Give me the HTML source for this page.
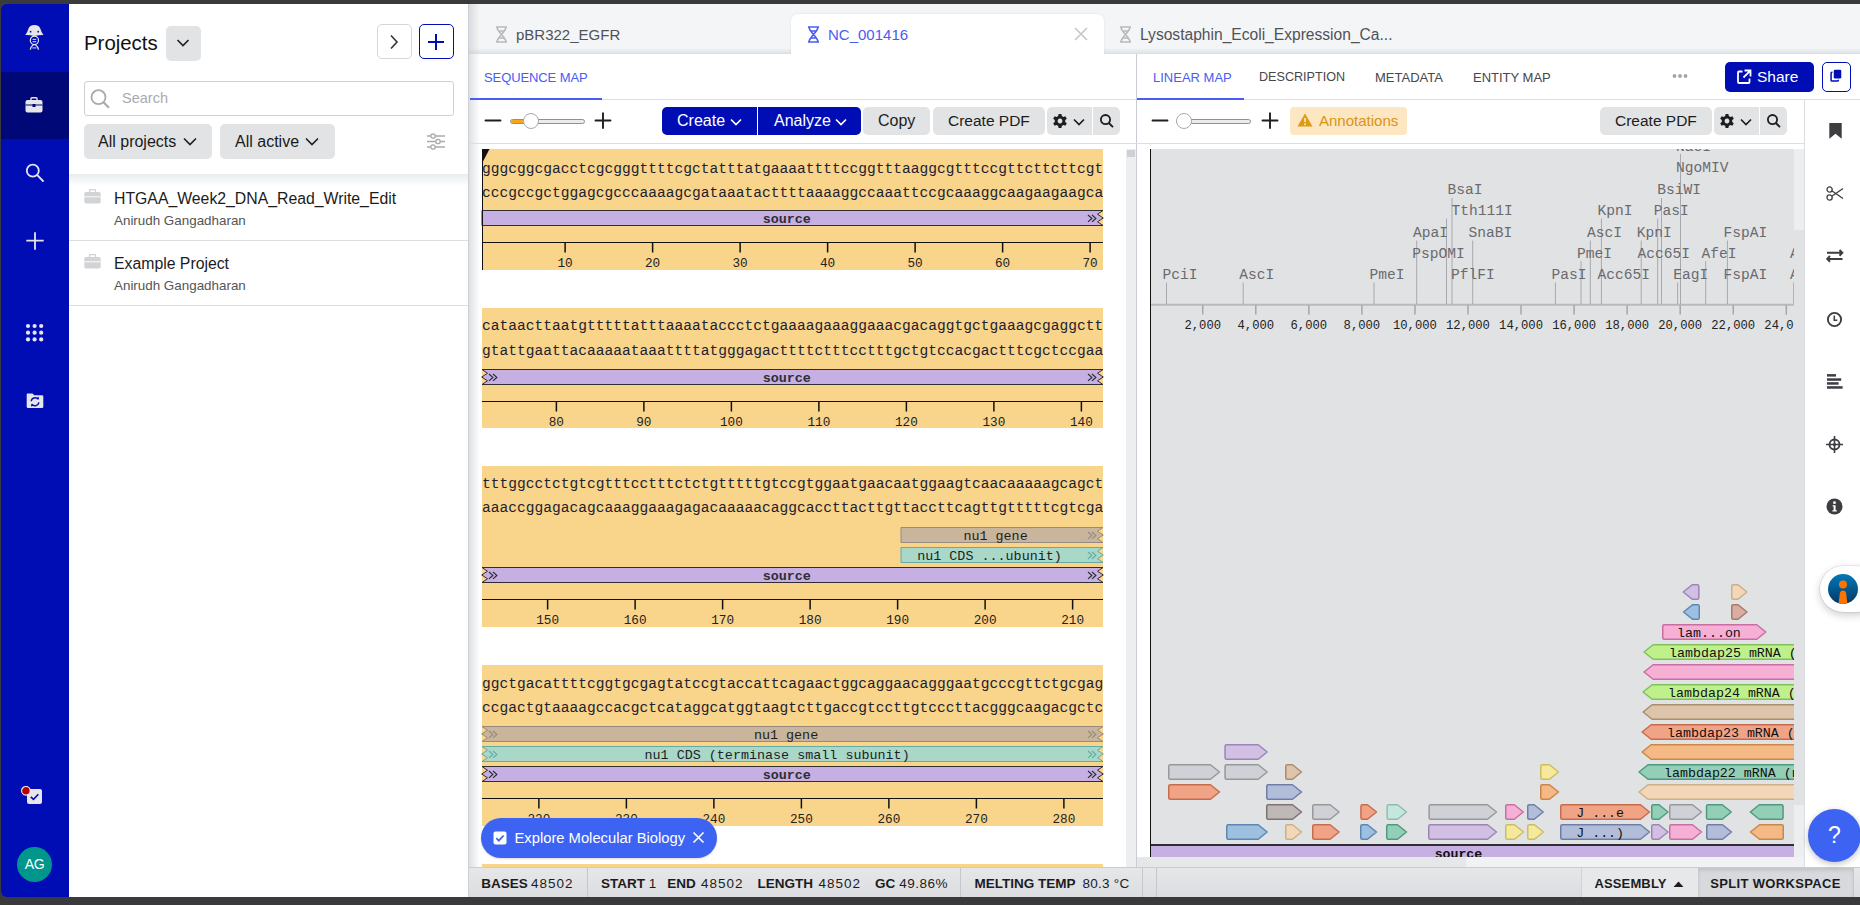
<!DOCTYPE html><html><head><meta charset="utf-8"><style>
html,body{margin:0;padding:0;width:1860px;height:905px;overflow:hidden;background:#3a3a3c;font-family:'Liberation Sans', sans-serif;}
.a{position:absolute}
</style></head><body>
<div style="position:absolute;left:1px;top:4px;width:68px;height:893px;background:#000db4;border-radius:6px 0 0 6px;overflow:hidden"><div style="position:absolute;left:0px;top:68px;width:68px;height:67px;background:#000878"></div></div>
<svg class="a" style="left:22px;top:22px" width="24" height="30" viewBox="0 0 24 30">
<path d="M3.3 12.9 Q5.5 10.5 6.3 7 Q7.6 2.9 12.4 2.9 Q17.2 2.9 18.5 7 Q19.3 10.5 21.5 12.9 Q17 12.7 12.4 14.1 Q7.8 12.7 3.3 12.9Z" fill="#e6e6ea"/>
<circle cx="8.6" cy="9.7" r="0.9" fill="#000db4"/><circle cx="16.2" cy="9.7" r="0.9" fill="#000db4"/>
<ellipse cx="12.4" cy="18.3" rx="4.1" ry="4.2" fill="none" stroke="#e6e6ea" stroke-width="1.2"/>
<path d="M10.6 17.4 h3.6 M10.6 19.7 h3.6" stroke="#e6e6ea" stroke-width="1"/>
<path d="M8.4 27.8 C8.4 24.8 10.5 23.3 12.4 22.5 C14.3 23.3 16.4 24.8 16.4 27.8" fill="none" stroke="#e6e6ea" stroke-width="1.3"/>
<path d="M10.3 25.9 h4.2" stroke="#b8bade" stroke-width="1.2"/>
</svg>
<svg class="a" style="left:25px;top:97px" width="18" height="16" viewBox="0 0 18 16">
<path d="M6 3 V1.5 Q6 0.7 6.8 0.7 H11.2 Q12 0.7 12 1.5 V3" fill="none" stroke="#e6e6ea" stroke-width="1.4"/>
<rect x="0.5" y="3" width="17" height="12.5" rx="2" fill="#e6e6ea"/>
<path d="M0.5 8 H17.5" stroke="#000878" stroke-width="1"/>
<rect x="7.5" y="7" width="3" height="3" fill="#000878"/>
</svg>
<svg class="a" style="left:24px;top:162px" width="22" height="22" viewBox="0 0 22 22">
<circle cx="8.8" cy="8.7" r="6" fill="none" stroke="#e6e6ea" stroke-width="1.8"/>
<path d="M13.3 13.2 L19 19" stroke="#e6e6ea" stroke-width="1.8" stroke-linecap="round"/>
</svg>
<svg class="a" style="left:25px;top:231px" width="20" height="20" viewBox="0 0 20 20">
<path d="M10 1.3 V18.7 M1.3 9.7 H18.7" stroke="#e6e6ea" stroke-width="1.8"/>
</svg>
<svg class="a" style="left:25px;top:323px" width="20" height="20" viewBox="0 0 20 20"><circle cx="3.0" cy="3.0" r="2.1" fill="#e6e6ea"/><circle cx="3.0" cy="9.7" r="2.1" fill="#e6e6ea"/><circle cx="3.0" cy="16.4" r="2.1" fill="#e6e6ea"/><circle cx="9.6" cy="3.0" r="2.1" fill="#e6e6ea"/><circle cx="9.6" cy="9.7" r="2.1" fill="#e6e6ea"/><circle cx="9.6" cy="16.4" r="2.1" fill="#e6e6ea"/><circle cx="16.2" cy="3.0" r="2.1" fill="#e6e6ea"/><circle cx="16.2" cy="9.7" r="2.1" fill="#e6e6ea"/><circle cx="16.2" cy="16.4" r="2.1" fill="#e6e6ea"/></svg>
<svg class="a" style="left:26px;top:393px" width="18" height="16" viewBox="0 0 18 16">
<path d="M1.5 0.5 H6.5 L8.3 2.3 H16 Q17.3 2.3 17.3 3.6 V13.7 Q17.3 15 16 15 H2 Q0.7 15 0.7 13.7 V1.5 Q0.7 0.5 1.5 0.5Z" fill="#e6e6ea"/>
<path d="M5.2 8.3 A3.8 3.8 0 0 1 12 6.3 M12.8 9.3 A3.8 3.8 0 0 1 6 11.3" fill="none" stroke="#000db4" stroke-width="1.4"/>
<path d="M10.6 5 L13.2 6.8 L12.6 3.8Z M7.4 12.6 L4.8 10.8 L5.4 13.8Z" fill="#000db4"/>
</svg>
<svg class="a" style="left:20px;top:784px" width="26" height="22" viewBox="0 0 26 22">
<rect x="7" y="5" width="15" height="15" rx="2" fill="#e6e6ea"/>
<path d="M10.8 12.8 L13.5 15.4 L18.4 10.3" fill="none" stroke="#000db4" stroke-width="1.6"/>
<circle cx="5.9" cy="6.8" r="4.3" fill="#b60000" stroke="#f2f2f2" stroke-width="1.1"/>
</svg>
<div style="position:absolute;left:17px;top:847px;width:35px;height:35px;background:#00968c;border-radius:50%;color:#fff;font-size:14px;line-height:35px;text-align:center;letter-spacing:-0.3px">AG</div>
<div style="position:absolute;left:69px;top:4px;width:399px;height:893px;background:#fff"></div>
<div style="position:absolute;left:84px;top:31px;white-space:pre;font-size:20.4px;line-height:24px;color:#111">Projects</div>
<div style="position:absolute;left:166px;top:26px;width:35px;height:35px;background:#e2e3e5;border-radius:5px"></div>
<svg class="a" style="left:176px;top:38px" width="14" height="10" viewBox="0 0 14 10"><path d="M1.5 2 L7 7.5 L12.5 2" fill="none" stroke="#222" stroke-width="1.7"/></svg>
<div style="position:absolute;left:377px;top:24px;width:33px;height:33px;border:1px solid #d4d6da;border-radius:5px;background:#fff"></div>
<svg class="a" style="left:389px;top:34px" width="10" height="16" viewBox="0 0 10 16"><path d="M2 1.5 L8 8 L2 14.5" fill="none" stroke="#333" stroke-width="1.6"/></svg>
<div style="position:absolute;left:419px;top:24px;width:33px;height:33px;border:1.5px solid #000db4;border-radius:5px;background:#fff"></div>
<svg class="a" style="left:426px;top:32px" width="20" height="20" viewBox="0 0 20 20"><path d="M10 2 V18 M2 10 H18" stroke="#000db4" stroke-width="2"/></svg>
<div style="position:absolute;left:84px;top:81px;width:368px;height:33px;border:1px solid #cfd1d5;border-radius:3px;background:#fff"></div>
<svg class="a" style="left:89px;top:88px" width="22" height="22" viewBox="0 0 22 22"><circle cx="9.5" cy="9.2" r="7" fill="none" stroke="#aaa" stroke-width="1.8"/><path d="M14.5 14.3 L20 19.8" stroke="#aaa" stroke-width="2.2"/></svg>
<div style="position:absolute;left:122px;top:90px;white-space:pre;font-size:14.5px;line-height:17px;color:#a9abb0">Search</div>
<div style="position:absolute;left:84px;top:124px;width:128px;height:35px;background:#e2e3e5;border-radius:5px"></div>
<div style="position:absolute;left:98px;top:132px;white-space:pre;font-size:16px;line-height:19px;color:#1a1a1a">All projects</div>
<svg class="a" style="left:183px;top:137px" width="14" height="9" viewBox="0 0 14 9"><path d="M1 1.5 L7 7.5 L13 1.5" fill="none" stroke="#222" stroke-width="1.7"/></svg>
<div style="position:absolute;left:220px;top:124px;width:115px;height:35px;background:#e2e3e5;border-radius:5px"></div>
<div style="position:absolute;left:235px;top:132px;white-space:pre;font-size:16px;line-height:19px;color:#1a1a1a">All active</div>
<svg class="a" style="left:305px;top:137px" width="14" height="9" viewBox="0 0 14 9"><path d="M1 1.5 L7 7.5 L13 1.5" fill="none" stroke="#222" stroke-width="1.7"/></svg>
<svg class="a" style="left:426px;top:132px" width="20" height="20" viewBox="0 0 20 20" fill="none" stroke="#aaa" stroke-width="1.3">
<path d="M1 4 H19 M1 9.5 H19 M1 15 H19"/><circle cx="7" cy="4" r="2.2" fill="#fff"/><circle cx="12" cy="9.5" r="2.2" fill="#fff"/><circle cx="7" cy="15" r="2.2" fill="#fff"/></svg>
<div style="position:absolute;left:69px;top:174px;width:399px;height:12px;background:linear-gradient(#e9ecee,rgba(255,255,255,0))"></div>
<svg class="a" style="left:84px;top:189px" width="17" height="15" viewBox="0 0 17 15"><path d="M5.5 3 V1.3 Q5.5 0.6 6.2 0.6 H10.8 Q11.5 0.6 11.5 1.3 V3" fill="none" stroke="#d2d3d6" stroke-width="1.3"/><rect x="0.3" y="3" width="16.4" height="11.5" rx="1.8" fill="#d2d3d6"/><path d="M0.3 7.8 H16.7" stroke="#fff" stroke-width="0.9"/></svg>
<div style="position:absolute;left:114px;top:190px;white-space:pre;font-size:15.8px;line-height:18px;color:#1b1b1b">HTGAA_Week2_DNA_Read_Write_Edit</div>
<div style="position:absolute;left:114px;top:213px;white-space:pre;font-size:13.4px;line-height:16px;color:#555">Anirudh Gangadharan</div>
<div style="position:absolute;left:69px;top:240px;width:399px;height:1px;background:#dcdee1"></div>
<svg class="a" style="left:84px;top:254px" width="17" height="15" viewBox="0 0 17 15"><path d="M5.5 3 V1.3 Q5.5 0.6 6.2 0.6 H10.8 Q11.5 0.6 11.5 1.3 V3" fill="none" stroke="#d2d3d6" stroke-width="1.3"/><rect x="0.3" y="3" width="16.4" height="11.5" rx="1.8" fill="#d2d3d6"/><path d="M0.3 7.8 H16.7" stroke="#fff" stroke-width="0.9"/></svg>
<div style="position:absolute;left:114px;top:255px;white-space:pre;font-size:15.8px;line-height:18px;color:#1b1b1b">Example Project</div>
<div style="position:absolute;left:114px;top:278px;white-space:pre;font-size:13.4px;line-height:16px;color:#555">Anirudh Gangadharan</div>
<div style="position:absolute;left:69px;top:305px;width:399px;height:1px;background:#dcdee1"></div>
<div style="position:absolute;left:468px;top:4px;width:1392px;height:893px;background:#fff"></div>
<div style="position:absolute;left:468px;top:4px;width:1392px;height:50px;background:#f4f5f7"></div>
<div style="position:absolute;left:468px;top:48px;width:1392px;height:6px;background:linear-gradient(rgba(220,226,230,0),rgba(214,222,226,0.9))"></div>
<svg class="a" style="left:495px;top:26px" width="13" height="17" viewBox="0 0 13 17" fill="none" stroke="#b8b9bc" stroke-width="1.6">
<path d="M1 1 H12 M1 16 H12 M2 1 C2 6 11 11 11 16 M11 1 C11 6 2 11 2 16 M3.5 5 H9.5 M3.5 12 H9.5"/></svg>
<div style="position:absolute;left:516px;top:26px;white-space:pre;font-size:15px;line-height:18px;color:#505257">pBR322_EGFR</div>
<div style="position:absolute;left:791px;top:14px;width:313px;height:40px;background:#fff;border-radius:7px 7px 0 0;box-shadow:0 0 3px rgba(0,0,0,0.08)"></div>
<div style="position:absolute;left:791px;top:50px;width:313px;height:6px;background:#fff"></div>
<svg class="a" style="left:807px;top:26px" width="13" height="17" viewBox="0 0 13 17" fill="none" stroke="#4a5cf2" stroke-width="1.6">
<path d="M1 1 H12 M1 16 H12 M2 1 C2 6 11 11 11 16 M11 1 C11 6 2 11 2 16 M3.5 5 H9.5 M3.5 12 H9.5"/></svg>
<div style="position:absolute;left:828px;top:26px;white-space:pre;font-size:15px;line-height:18px;color:#4a5cf2">NC_001416</div>
<svg class="a" style="left:1074px;top:27px" width="14" height="14" viewBox="0 0 14 14"><path d="M1 1 L13 13 M13 1 L1 13" stroke="#c6c7ca" stroke-width="1.6"/></svg>
<svg class="a" style="left:1119px;top:26px" width="13" height="17" viewBox="0 0 13 17" fill="none" stroke="#b8b9bc" stroke-width="1.6">
<path d="M1 1 H12 M1 16 H12 M2 1 C2 6 11 11 11 16 M11 1 C11 6 2 11 2 16 M3.5 5 H9.5 M3.5 12 H9.5"/></svg>
<div style="position:absolute;left:1140px;top:26px;white-space:pre;font-size:15.6px;line-height:18px;color:#505257">Lysostaphin_Ecoli_Expression_Ca...</div>
<div style="position:absolute;left:468px;top:4px;width:12px;height:893px;background:linear-gradient(90deg,rgba(196,199,204,0.6),rgba(255,255,255,0))"></div>
<div style="position:absolute;left:468px;top:4px;width:1px;height:893px;background:rgba(200,203,208,0.8)"></div>
<div style="position:absolute;left:469px;top:99px;width:1391px;height:1px;background:#dcdee2"></div>
<div style="position:absolute;left:484px;top:70px;white-space:pre;font-size:13px;line-height:15px;color:#4a5cf2;letter-spacing:-0.1px">SEQUENCE MAP</div>
<div style="position:absolute;left:470px;top:98px;width:132px;height:2px;background:#4a5cf2"></div>
<div style="position:absolute;left:1136px;top:54px;width:1px;height:813px;background:#c9cdd3"></div>
<div style="position:absolute;left:1153px;top:70px;white-space:pre;font-size:13px;line-height:15px;color:#4a5cf2">LINEAR MAP</div>
<div style="position:absolute;left:1137px;top:98px;width:107px;height:2px;background:#4a5cf2"></div>
<div style="position:absolute;left:1259px;top:70px;white-space:pre;font-size:12.6px;line-height:15px;color:#45474c">DESCRIPTION</div>
<div style="position:absolute;left:1375px;top:70px;white-space:pre;font-size:13px;line-height:15px;color:#45474c">METADATA</div>
<div style="position:absolute;left:1473px;top:70px;white-space:pre;font-size:13px;line-height:15px;color:#45474c">ENTITY MAP</div>
<svg class="a" style="left:1672px;top:72px" width="16" height="8" viewBox="0 0 16 8"><circle cx="2.5" cy="4" r="1.9" fill="#a3a5aa"/><circle cx="8" cy="4" r="1.9" fill="#a3a5aa"/><circle cx="13.5" cy="4" r="1.9" fill="#a3a5aa"/></svg>
<div style="position:absolute;left:1725px;top:62px;width:89px;height:30px;background:#000db4;border-radius:5px"></div>
<svg class="a" style="left:1736px;top:69px" width="16" height="16" viewBox="0 0 16 16" fill="none" stroke="#fff" stroke-width="1.8"><path d="M6.5 2.5 H3 Q2 2.5 2 3.5 V13 Q2 14 3 14 H12.5 Q13.5 14 13.5 13 V9.5"/><path d="M8.5 1.5 H14.5 V7.5 M14.3 1.7 L7.5 8.5"/></svg>
<div style="position:absolute;left:1757px;top:68px;white-space:pre;font-size:15.5px;line-height:18px;color:#fff">Share</div>
<div style="position:absolute;left:1822px;top:62px;width:29px;height:30px;border:1.5px solid #000db4;border-radius:5px;background:#fff;box-sizing:border-box"></div>
<svg class="a" style="left:1830px;top:69px" width="12.5" height="14" viewBox="0 0 15 16.8"><rect x="4.5" y="1" width="9" height="10.5" rx="1.5" fill="#000db4"/><path d="M3 4 H2.3 Q1.3 4 1.3 5 V13.5 Q1.3 14.5 2.3 14.5 H9 Q10 14.5 10 13.5 V13" fill="none" stroke="#000db4" stroke-width="1.8"/></svg>
<div style="position:absolute;left:469px;top:143px;width:1335px;height:1px;background:#dcdee2"></div>
<svg class="a" style="left:484px;top:113px" width="18" height="16"><path d="M1.5 7.5 H16.5" stroke="#1f1f22" stroke-width="1.9" stroke-linecap="round"/></svg>
<div style="position:absolute;left:510px;top:119px;width:75px;height:5px;background:#ececee;border:1px solid #8e8f93;border-radius:3px;box-sizing:border-box"></div><div style="position:absolute;left:511px;top:120px;width:21px;height:3px;background:#f5a623;border-radius:2px 0 0 2px"></div><div style="position:absolute;left:523px;top:113px;width:16px;height:16px;background:#fff;border:1px solid #a8aaae;border-radius:50%;box-sizing:border-box"></div>
<svg class="a" style="left:594px;top:112px" width="18" height="18"><path d="M1.5 8.5 H16.5 M9 1.3 V16" stroke="#1f1f22" stroke-width="1.9" stroke-linecap="round"/></svg>
<div style="position:absolute;left:662px;top:107px;width:199px;height:28px;background:#000db4;border-radius:5px"></div>
<div style="position:absolute;left:757px;top:107px;width:1px;height:28px;background:#fff"></div>
<div style="position:absolute;left:677px;top:112px;white-space:pre;font-size:16px;line-height:18px;color:#fff">Create</div>
<div style="position:absolute;left:774px;top:112px;white-space:pre;font-size:16px;line-height:18px;color:#fff">Analyze</div>
<svg class="a" style="left:730px;top:118px" width="12" height="8" viewBox="0 0 12 8"><path d="M1 1.5 L6 6.5 L11 1.5" fill="none" stroke="#fff" stroke-width="1.7"/></svg>
<svg class="a" style="left:835px;top:118px" width="12" height="8" viewBox="0 0 12 8"><path d="M1 1.5 L6 6.5 L11 1.5" fill="none" stroke="#fff" stroke-width="1.7"/></svg>
<div style="position:absolute;left:863px;top:107px;width:67px;height:28px;background:#e2e3e5;border-radius:5px"></div>
<div style="position:absolute;left:878px;top:112px;white-space:pre;font-size:16px;line-height:18px;color:#1d1d20">Copy</div>
<div style="position:absolute;left:933px;top:107px;width:112px;height:28px;background:#e2e3e5;border-radius:5px"></div>
<div style="position:absolute;left:948px;top:112px;white-space:pre;font-size:15.5px;line-height:18px;color:#1d1d20">Create PDF</div>
<div style="position:absolute;left:1047px;top:107px;width:73px;height:28px;background:#e2e3e5;border-radius:5px"></div><div style="position:absolute;left:1092px;top:107px;width:1px;height:28px;background:#fff"></div><svg class="a" style="left:1052px;top:113px" width="16" height="16" viewBox="0 0 16 16"><path fill="#1d1d20" fill-rule="evenodd" d="M6.6 1 H9.4 L9.8 3.1 L11.4 4 L13.4 3.3 L14.8 5.7 L13.2 7.1 V8.9 L14.8 10.3 L13.4 12.7 L11.4 12 L9.8 12.9 L9.4 15 H6.6 L6.2 12.9 L4.6 12 L2.6 12.7 L1.2 10.3 L2.8 8.9 V7.1 L1.2 5.7 L2.6 3.3 L4.6 4 L6.2 3.1 Z M8 5.6 A2.4 2.4 0 1 0 8.01 5.6Z"/></svg><svg class="a" style="left:1073px;top:118px" width="12" height="8" viewBox="0 0 12 8"><path d="M1 1.5 L6 6.5 L11 1.5" fill="none" stroke="#1d1d20" stroke-width="1.7"/></svg><svg class="a" style="left:1099px;top:113px" width="16" height="16" viewBox="0 0 16 16"><circle cx="6.5" cy="6.6" r="4.6" fill="none" stroke="#1d1d20" stroke-width="1.8"/><path d="M9.8 10 L14 14.2" stroke="#1d1d20" stroke-width="1.9"/></svg>
<svg class="a" style="left:1151px;top:113px" width="18" height="16"><path d="M1.5 7.5 H16.5" stroke="#1f1f22" stroke-width="1.9" stroke-linecap="round"/></svg>
<div style="position:absolute;left:1176px;top:119px;width:75px;height:5px;background:#ececee;border:1px solid #8e8f93;border-radius:3px;box-sizing:border-box"></div><div style="position:absolute;left:1176px;top:113px;width:16px;height:16px;background:#fff;border:1px solid #a8aaae;border-radius:50%;box-sizing:border-box"></div>
<svg class="a" style="left:1261px;top:112px" width="18" height="18"><path d="M1.5 8.5 H16.5 M9 1.3 V16" stroke="#1f1f22" stroke-width="1.9" stroke-linecap="round"/></svg>
<div style="position:absolute;left:1290px;top:107px;width:117px;height:28px;background:#fde7c2;border-radius:4px"></div>
<svg class="a" style="left:1297px;top:113px" width="16" height="14" viewBox="0 0 16 14"><path d="M8 0.5 L15.5 13.5 H0.5 Z" fill="#dd9a12"/><path d="M8 5 V9" stroke="#fde7c2" stroke-width="1.7"/><circle cx="8" cy="11.2" r="1" fill="#fde7c2"/></svg>
<div style="position:absolute;left:1319px;top:112px;white-space:pre;font-size:15px;line-height:18px;color:#d99414">Annotations</div>
<div style="position:absolute;left:1600px;top:107px;width:112px;height:28px;background:#e2e3e5;border-radius:5px"></div>
<div style="position:absolute;left:1615px;top:112px;white-space:pre;font-size:15.5px;line-height:18px;color:#1d1d20">Create PDF</div>
<div style="position:absolute;left:1714px;top:107px;width:73px;height:28px;background:#e2e3e5;border-radius:5px"></div><div style="position:absolute;left:1759px;top:107px;width:1px;height:28px;background:#fff"></div><svg class="a" style="left:1719px;top:113px" width="16" height="16" viewBox="0 0 16 16"><path fill="#1d1d20" fill-rule="evenodd" d="M6.6 1 H9.4 L9.8 3.1 L11.4 4 L13.4 3.3 L14.8 5.7 L13.2 7.1 V8.9 L14.8 10.3 L13.4 12.7 L11.4 12 L9.8 12.9 L9.4 15 H6.6 L6.2 12.9 L4.6 12 L2.6 12.7 L1.2 10.3 L2.8 8.9 V7.1 L1.2 5.7 L2.6 3.3 L4.6 4 L6.2 3.1 Z M8 5.6 A2.4 2.4 0 1 0 8.01 5.6Z"/></svg><svg class="a" style="left:1740px;top:118px" width="12" height="8" viewBox="0 0 12 8"><path d="M1 1.5 L6 6.5 L11 1.5" fill="none" stroke="#1d1d20" stroke-width="1.7"/></svg><svg class="a" style="left:1766px;top:113px" width="16" height="16" viewBox="0 0 16 16"><circle cx="6.5" cy="6.6" r="4.6" fill="none" stroke="#1d1d20" stroke-width="1.8"/><path d="M9.8 10 L14 14.2" stroke="#1d1d20" stroke-width="1.9"/></svg>
<div style="position:absolute;left:1804px;top:100px;width:1px;height:767px;background:#dcdee2"></div>
<div class="a" style="left:469px;top:144px;width:667px;height:723px;overflow:hidden">
<div class="a" style="left:13px;top:5px;width:621px;height:121px;background:#f9d48b"></div>
<div class="a" style="left:13px;top:17.02px;font:14.583px/17px 'Liberation Mono', monospace;color:#1c2230;white-space:pre">gggcggcgacctcgcgggttttcgctatttatgaaaattttccggtttaaggcgtttccgttcttcttcgt</div>
<div class="a" style="left:13px;top:40.92px;font:14.583px/17px 'Liberation Mono', monospace;color:#1c2230;white-space:pre">cccgccgctggagcgcccaaaagcgataaatacttttaaaaggccaaattccgcaaaggcaagaagaagca</div>
<svg class="a" style="left:11px;top:65px;overflow:visible" width="625" height="18" viewBox="-2 -1 625 18"><path d="M0 0.5 L621 0.5 L615.5 4.25 L621.3 8.0 L615.5 11.75 L621 15.5 L0 15.5 L0 0.5 Z" fill="#c6afe3" stroke="none"/><path d="M0 0.5 L621 0.5 L615.5 4.25 L621.3 8.0 L615.5 11.75 L621 15.5 L0 15.5 L0 0.5 Z" fill="none" stroke="#2e2e33" stroke-width="1"/><path d="M606 4.95 L609.8 8.4 L606 11.850000000000001 M610 4.95 L613.8 8.4 L610 11.850000000000001" fill="none" stroke="#2e2e33" stroke-width="1.25"/></svg><div class="a" style="left:293.65px;top:67.63px;font:bold 13.4px/16px 'Liberation Mono', monospace;color:#2e2e33;white-space:pre">source</div>
<svg class="a" style="left:13px;top:97px" width="621" height="14" viewBox="0 0 621 14"><path d="M0 1.5 H621" stroke="#111" stroke-width="1.2"/><path d="M83.12 1 V11.5" stroke="#111" stroke-width="1.5"/><path d="M170.62 1 V11.5" stroke="#111" stroke-width="1.5"/><path d="M258.12 1 V11.5" stroke="#111" stroke-width="1.5"/><path d="M345.62 1 V11.5" stroke="#111" stroke-width="1.5"/><path d="M433.12 1 V11.5" stroke="#111" stroke-width="1.5"/><path d="M520.62 1 V11.5" stroke="#111" stroke-width="1.5"/><path d="M608.12 1 V11.5" stroke="#111" stroke-width="1.5"/></svg>
<div class="a" style="left:88.50px;top:113.30px;font:12.7px/14px 'Liberation Mono', monospace;color:#222;white-space:pre">10</div><div class="a" style="left:176.00px;top:113.30px;font:12.7px/14px 'Liberation Mono', monospace;color:#222;white-space:pre">20</div><div class="a" style="left:263.50px;top:113.30px;font:12.7px/14px 'Liberation Mono', monospace;color:#222;white-space:pre">30</div><div class="a" style="left:351.00px;top:113.30px;font:12.7px/14px 'Liberation Mono', monospace;color:#222;white-space:pre">40</div><div class="a" style="left:438.50px;top:113.30px;font:12.7px/14px 'Liberation Mono', monospace;color:#222;white-space:pre">50</div><div class="a" style="left:526.00px;top:113.30px;font:12.7px/14px 'Liberation Mono', monospace;color:#222;white-space:pre">60</div><div class="a" style="left:613.51px;top:113.30px;font:12.7px/14px 'Liberation Mono', monospace;color:#222;white-space:pre">70</div>
<div class="a" style="left:13px;top:5px;width:1.3px;height:121px;background:#111"></div>
<svg class="a" style="left:13px;top:5px" width="9" height="13"><path d="M0 0 H7.5 L1 12.5 H0Z" fill="#111"/></svg>
<div class="a" style="left:13px;top:164px;width:621px;height:120px;background:#f9d48b"></div>
<div class="a" style="left:13px;top:174.22px;font:14.583px/17px 'Liberation Mono', monospace;color:#1c2230;white-space:pre">cataacttaatgtttttatttaaaataccctctgaaaagaaaggaaacgacaggtgctgaaagcgaggctt</div>
<div class="a" style="left:13px;top:198.92px;font:14.583px/17px 'Liberation Mono', monospace;color:#1c2230;white-space:pre">gtattgaattacaaaaataaattttatgggagacttttctttcctttgctgtccacgactttcgctccgaa</div>
<svg class="a" style="left:11px;top:224px;overflow:visible" width="625" height="18" viewBox="-2 -1 625 18"><path d="M0 0.5 L621 0.5 L615.5 4.25 L621.3 8.0 L615.5 11.75 L621 15.5 L0 15.5 L5.5 11.75 L-0.3 8.0 L5.5 4.25 L0 0.5 Z" fill="#c6afe3" stroke="none"/><path d="M0 0.5 L621 0.5 L615.5 4.25 L621.3 8.0 L615.5 11.75 L621 15.5 L0 15.5 L5.5 11.75 L-0.3 8.0 L5.5 4.25 L0 0.5 Z" fill="none" stroke="#2e2e33" stroke-width="1"/><path d="M606 4.95 L609.8 8.4 L606 11.850000000000001 M610 4.95 L613.8 8.4 L610 11.850000000000001" fill="none" stroke="#2e2e33" stroke-width="1.25"/><path d="M7 4.95 L10.8 8.4 L7 11.850000000000001 M11 4.95 L14.8 8.4 L11 11.850000000000001" fill="none" stroke="#2e2e33" stroke-width="1.25"/></svg><div class="a" style="left:293.65px;top:226.63px;font:bold 13.4px/16px 'Liberation Mono', monospace;color:#2e2e33;white-space:pre">source</div>
<svg class="a" style="left:13px;top:256px" width="621" height="14" viewBox="0 0 621 14"><path d="M0 1.5 H621" stroke="#111" stroke-width="1.2"/><path d="M74.38 1 V11.5" stroke="#111" stroke-width="1.5"/><path d="M161.88 1 V11.5" stroke="#111" stroke-width="1.5"/><path d="M249.38 1 V11.5" stroke="#111" stroke-width="1.5"/><path d="M336.88 1 V11.5" stroke="#111" stroke-width="1.5"/><path d="M424.38 1 V11.5" stroke="#111" stroke-width="1.5"/><path d="M511.88 1 V11.5" stroke="#111" stroke-width="1.5"/><path d="M599.38 1 V11.5" stroke="#111" stroke-width="1.5"/></svg>
<div class="a" style="left:79.75px;top:272.30px;font:12.7px/14px 'Liberation Mono', monospace;color:#222;white-space:pre">80</div><div class="a" style="left:167.25px;top:272.30px;font:12.7px/14px 'Liberation Mono', monospace;color:#222;white-space:pre">90</div><div class="a" style="left:250.95px;top:272.30px;font:12.7px/14px 'Liberation Mono', monospace;color:#222;white-space:pre">100</div><div class="a" style="left:338.45px;top:272.30px;font:12.7px/14px 'Liberation Mono', monospace;color:#222;white-space:pre">110</div><div class="a" style="left:425.95px;top:272.30px;font:12.7px/14px 'Liberation Mono', monospace;color:#222;white-space:pre">120</div><div class="a" style="left:513.45px;top:272.30px;font:12.7px/14px 'Liberation Mono', monospace;color:#222;white-space:pre">130</div><div class="a" style="left:600.94px;top:272.30px;font:12.7px/14px 'Liberation Mono', monospace;color:#222;white-space:pre">140</div>
<div class="a" style="left:13px;top:322px;width:621px;height:161px;background:#f9d48b"></div>
<div class="a" style="left:13px;top:332.42px;font:14.583px/17px 'Liberation Mono', monospace;color:#1c2230;white-space:pre">tttggcctctgtcgtttcctttctctgtttttgtccgtggaatgaacaatggaagtcaacaaaaagcagct</div>
<div class="a" style="left:13px;top:356.42px;font:14.583px/17px 'Liberation Mono', monospace;color:#1c2230;white-space:pre">aaaccggagacagcaaaggaaagagacaaaaacaggcaccttacttgttaccttcagttgtttttcgtcga</div>
<svg class="a" style="left:430px;top:382px;overflow:visible" width="206" height="18" viewBox="-2 -1 206 18"><path d="M0 0.5 L202 0.5 L196.5 4.25 L202.3 8.0 L196.5 11.75 L202 15.5 L0 15.5 L0 0.5 Z" fill="#c9b59c" stroke="none"/><path d="M0 0.5 L202 0.5 L196.5 4.25 L202.3 8.0 L196.5 11.75 L202 15.5 L0 15.5 L0 0.5 Z" fill="none" stroke="#958b80" stroke-width="1"/><path d="M187 4.95 L190.8 8.4 L187 11.850000000000001 M191 4.95 L194.8 8.4 L191 11.850000000000001" fill="none" stroke="#958b80" stroke-width="1.25"/></svg><div class="a" style="left:494.40px;top:384.63px;font:normal 13.4px/16px 'Liberation Mono', monospace;color:#1e1e22;white-space:pre">nu1 gene</div>
<svg class="a" style="left:430px;top:402px;overflow:visible" width="206" height="18" viewBox="-2 -1 206 18"><path d="M0 0.5 L202 0.5 L196.5 4.25 L202.3 8.0 L196.5 11.75 L202 15.5 L0 15.5 L0 0.5 Z" fill="#a9d8c9" stroke="none"/><path d="M0 0.5 L202 0.5 L196.5 4.25 L202.3 8.0 L196.5 11.75 L202 15.5 L0 15.5 L0 0.5 Z" fill="none" stroke="#64aba6" stroke-width="1"/><path d="M187 4.95 L190.8 8.4 L187 11.850000000000001 M191 4.95 L194.8 8.4 L191 11.850000000000001" fill="none" stroke="#64aba6" stroke-width="1.25"/></svg><div class="a" style="left:448.20px;top:404.63px;font:normal 13.4px/16px 'Liberation Mono', monospace;color:#1e1e22;white-space:pre">nu1 CDS ...ubunit)</div>
<svg class="a" style="left:11px;top:422px;overflow:visible" width="625" height="18" viewBox="-2 -1 625 18"><path d="M0 0.5 L621 0.5 L615.5 4.25 L621.3 8.0 L615.5 11.75 L621 15.5 L0 15.5 L5.5 11.75 L-0.3 8.0 L5.5 4.25 L0 0.5 Z" fill="#c6afe3" stroke="none"/><path d="M0 0.5 L621 0.5 L615.5 4.25 L621.3 8.0 L615.5 11.75 L621 15.5 L0 15.5 L5.5 11.75 L-0.3 8.0 L5.5 4.25 L0 0.5 Z" fill="none" stroke="#2e2e33" stroke-width="1"/><path d="M606 4.95 L609.8 8.4 L606 11.850000000000001 M610 4.95 L613.8 8.4 L610 11.850000000000001" fill="none" stroke="#2e2e33" stroke-width="1.25"/><path d="M7 4.95 L10.8 8.4 L7 11.850000000000001 M11 4.95 L14.8 8.4 L11 11.850000000000001" fill="none" stroke="#2e2e33" stroke-width="1.25"/></svg><div class="a" style="left:293.65px;top:424.63px;font:bold 13.4px/16px 'Liberation Mono', monospace;color:#2e2e33;white-space:pre">source</div>
<svg class="a" style="left:13px;top:454px" width="621" height="14" viewBox="0 0 621 14"><path d="M0 1.5 H621" stroke="#111" stroke-width="1.2"/><path d="M65.62 1 V11.5" stroke="#111" stroke-width="1.5"/><path d="M153.12 1 V11.5" stroke="#111" stroke-width="1.5"/><path d="M240.62 1 V11.5" stroke="#111" stroke-width="1.5"/><path d="M328.12 1 V11.5" stroke="#111" stroke-width="1.5"/><path d="M415.62 1 V11.5" stroke="#111" stroke-width="1.5"/><path d="M503.12 1 V11.5" stroke="#111" stroke-width="1.5"/><path d="M590.62 1 V11.5" stroke="#111" stroke-width="1.5"/></svg>
<div class="a" style="left:67.20px;top:470.30px;font:12.7px/14px 'Liberation Mono', monospace;color:#222;white-space:pre">150</div><div class="a" style="left:154.70px;top:470.30px;font:12.7px/14px 'Liberation Mono', monospace;color:#222;white-space:pre">160</div><div class="a" style="left:242.20px;top:470.30px;font:12.7px/14px 'Liberation Mono', monospace;color:#222;white-space:pre">170</div><div class="a" style="left:329.70px;top:470.30px;font:12.7px/14px 'Liberation Mono', monospace;color:#222;white-space:pre">180</div><div class="a" style="left:417.20px;top:470.30px;font:12.7px/14px 'Liberation Mono', monospace;color:#222;white-space:pre">190</div><div class="a" style="left:504.70px;top:470.30px;font:12.7px/14px 'Liberation Mono', monospace;color:#222;white-space:pre">200</div><div class="a" style="left:592.19px;top:470.30px;font:12.7px/14px 'Liberation Mono', monospace;color:#222;white-space:pre">210</div>
<div class="a" style="left:13px;top:521px;width:621px;height:161px;background:#f9d48b"></div>
<div class="a" style="left:13px;top:532.42px;font:14.583px/17px 'Liberation Mono', monospace;color:#1c2230;white-space:pre">ggctgacattttcggtgcgagtatccgtaccattcagaactggcaggaacagggaatgcccgttctgcgag</div>
<div class="a" style="left:13px;top:556.12px;font:14.583px/17px 'Liberation Mono', monospace;color:#1c2230;white-space:pre">ccgactgtaaaagccacgctcataggcatggtaagtcttgaccgtccttgtcccttacgggcaagacgctc</div>
<svg class="a" style="left:11px;top:581px;overflow:visible" width="625" height="18" viewBox="-2 -1 625 18"><path d="M0 0.5 L621 0.5 L615.5 4.25 L621.3 8.0 L615.5 11.75 L621 15.5 L0 15.5 L5.5 11.75 L-0.3 8.0 L5.5 4.25 L0 0.5 Z" fill="#c9b59c" stroke="none"/><path d="M0 0.5 L621 0.5 L615.5 4.25 L621.3 8.0 L615.5 11.75 L621 15.5 L0 15.5 L5.5 11.75 L-0.3 8.0 L5.5 4.25 L0 0.5 Z" fill="none" stroke="#958b80" stroke-width="1"/><path d="M606 4.95 L609.8 8.4 L606 11.850000000000001 M610 4.95 L613.8 8.4 L610 11.850000000000001" fill="none" stroke="#958b80" stroke-width="1.25"/><path d="M7 4.95 L10.8 8.4 L7 11.850000000000001 M11 4.95 L14.8 8.4 L11 11.850000000000001" fill="none" stroke="#958b80" stroke-width="1.25"/></svg><div class="a" style="left:284.90px;top:583.63px;font:normal 13.4px/16px 'Liberation Mono', monospace;color:#1e1e22;white-space:pre">nu1 gene</div>
<svg class="a" style="left:11px;top:601px;overflow:visible" width="625" height="18" viewBox="-2 -1 625 18"><path d="M0 0.5 L621 0.5 L615.5 4.25 L621.3 8.0 L615.5 11.75 L621 15.5 L0 15.5 L5.5 11.75 L-0.3 8.0 L5.5 4.25 L0 0.5 Z" fill="#a9d8c9" stroke="none"/><path d="M0 0.5 L621 0.5 L615.5 4.25 L621.3 8.0 L615.5 11.75 L621 15.5 L0 15.5 L5.5 11.75 L-0.3 8.0 L5.5 4.25 L0 0.5 Z" fill="none" stroke="#64aba6" stroke-width="1"/><path d="M606 4.95 L609.8 8.4 L606 11.850000000000001 M610 4.95 L613.8 8.4 L610 11.850000000000001" fill="none" stroke="#64aba6" stroke-width="1.25"/><path d="M7 4.95 L10.8 8.4 L7 11.850000000000001 M11 4.95 L14.8 8.4 L11 11.850000000000001" fill="none" stroke="#64aba6" stroke-width="1.25"/></svg><div class="a" style="left:175.52px;top:603.63px;font:normal 13.4px/16px 'Liberation Mono', monospace;color:#1e1e22;white-space:pre">nu1 CDS (terminase small subunit)</div>
<svg class="a" style="left:11px;top:621px;overflow:visible" width="625" height="18" viewBox="-2 -1 625 18"><path d="M0 0.5 L621 0.5 L615.5 4.25 L621.3 8.0 L615.5 11.75 L621 15.5 L0 15.5 L5.5 11.75 L-0.3 8.0 L5.5 4.25 L0 0.5 Z" fill="#c6afe3" stroke="none"/><path d="M0 0.5 L621 0.5 L615.5 4.25 L621.3 8.0 L615.5 11.75 L621 15.5 L0 15.5 L5.5 11.75 L-0.3 8.0 L5.5 4.25 L0 0.5 Z" fill="none" stroke="#2e2e33" stroke-width="1"/><path d="M606 4.95 L609.8 8.4 L606 11.850000000000001 M610 4.95 L613.8 8.4 L610 11.850000000000001" fill="none" stroke="#2e2e33" stroke-width="1.25"/><path d="M7 4.95 L10.8 8.4 L7 11.850000000000001 M11 4.95 L14.8 8.4 L11 11.850000000000001" fill="none" stroke="#2e2e33" stroke-width="1.25"/></svg><div class="a" style="left:293.65px;top:623.63px;font:bold 13.4px/16px 'Liberation Mono', monospace;color:#2e2e33;white-space:pre">source</div>
<svg class="a" style="left:13px;top:653px" width="621" height="14" viewBox="0 0 621 14"><path d="M0 1.5 H621" stroke="#111" stroke-width="1.2"/><path d="M56.88 1 V11.5" stroke="#111" stroke-width="1.5"/><path d="M144.38 1 V11.5" stroke="#111" stroke-width="1.5"/><path d="M231.88 1 V11.5" stroke="#111" stroke-width="1.5"/><path d="M319.38 1 V11.5" stroke="#111" stroke-width="1.5"/><path d="M406.88 1 V11.5" stroke="#111" stroke-width="1.5"/><path d="M494.38 1 V11.5" stroke="#111" stroke-width="1.5"/><path d="M581.88 1 V11.5" stroke="#111" stroke-width="1.5"/></svg>
<div class="a" style="left:58.45px;top:669.30px;font:12.7px/14px 'Liberation Mono', monospace;color:#222;white-space:pre">220</div><div class="a" style="left:145.95px;top:669.30px;font:12.7px/14px 'Liberation Mono', monospace;color:#222;white-space:pre">230</div><div class="a" style="left:233.45px;top:669.30px;font:12.7px/14px 'Liberation Mono', monospace;color:#222;white-space:pre">240</div><div class="a" style="left:320.95px;top:669.30px;font:12.7px/14px 'Liberation Mono', monospace;color:#222;white-space:pre">250</div><div class="a" style="left:408.45px;top:669.30px;font:12.7px/14px 'Liberation Mono', monospace;color:#222;white-space:pre">260</div><div class="a" style="left:495.95px;top:669.30px;font:12.7px/14px 'Liberation Mono', monospace;color:#222;white-space:pre">270</div><div class="a" style="left:583.44px;top:669.30px;font:12.7px/14px 'Liberation Mono', monospace;color:#222;white-space:pre">280</div>
<div class="a" style="left:13px;top:720px;width:621px;height:161px;background:#f9d48b"></div>
<div class="a" style="left:657px;top:5px;width:10px;height:718px;background:#eceef0"></div>
<div class="a" style="left:658px;top:6px;width:8px;height:7px;background:#cdd0d4"></div>
</div>
<div style="position:absolute;left:481px;top:818px;width:236px;height:40px;background:#3d63f2;border-radius:20px;box-shadow:0 1px 2px rgba(0,0,0,0.15)"></div>
<svg class="a" style="left:493px;top:831px" width="14" height="14" viewBox="0 0 14 14"><rect x="0.5" y="0.5" width="13" height="13" rx="2" fill="#fff"/><path d="M3.3 7.2 L5.8 9.6 L10.6 4.5" fill="none" stroke="#3d63f2" stroke-width="1.8"/></svg>
<div style="position:absolute;left:514.5px;top:829px;white-space:pre;font-size:14.75px;line-height:18px;color:#fff">Explore Molecular Biology</div>
<svg class="a" style="left:692px;top:831px" width="13" height="13" viewBox="0 0 13 13"><path d="M1.5 1.5 L11.5 11.5 M11.5 1.5 L1.5 11.5" stroke="#fff" stroke-width="1.6"/></svg>
<div class="a" style="left:1137px;top:144px;width:667px;height:723px;overflow:hidden;background:#fff">
<div class="a" style="left:13px;top:5px;width:654px;height:708px;background:#e1e2e4"></div>
<div class="a" style="left:657px;top:5px;width:10px;height:81px;background:#eceef0"></div>
<div class="a" style="left:657px;top:661px;width:10px;height:52px;background:#eceef0"></div>
<div class="a" style="left:0px;top:713px;width:667px;height:10px;background:#e6e7e9"></div>
<div class="a" style="left:329px;top:713px;width:338px;height:10px;background:#f1f2f4"></div>
<div class="a" style="left:13px;top:5px;width:644px;height:708px;overflow:hidden">
<svg class="a" style="left:0;top:0" width="644" height="708" viewBox="1150 149 644 708"><path d="M1150 304.8 H1794" stroke="#b9babd" stroke-width="2"/><path d="M1202.75 305 V314.6" stroke="#a6a7ab" stroke-width="1.5"/><path d="M1255.80 305 V314.6" stroke="#a6a7ab" stroke-width="1.5"/><path d="M1308.85 305 V314.6" stroke="#a6a7ab" stroke-width="1.5"/><path d="M1361.90 305 V314.6" stroke="#a6a7ab" stroke-width="1.5"/><path d="M1414.95 305 V314.6" stroke="#a6a7ab" stroke-width="1.5"/><path d="M1468.00 305 V314.6" stroke="#a6a7ab" stroke-width="1.5"/><path d="M1521.05 305 V314.6" stroke="#a6a7ab" stroke-width="1.5"/><path d="M1574.10 305 V314.6" stroke="#a6a7ab" stroke-width="1.5"/><path d="M1627.15 305 V314.6" stroke="#a6a7ab" stroke-width="1.5"/><path d="M1680.20 305 V314.6" stroke="#a6a7ab" stroke-width="1.5"/><path d="M1733.25 305 V314.6" stroke="#a6a7ab" stroke-width="1.5"/><path d="M1786.30 305 V314.6" stroke="#a6a7ab" stroke-width="1.5"/><path d="M1166.5 282.6 V304" stroke="#a7a8ac" stroke-width="1"/><path d="M1243.2 282.6 V304" stroke="#a7a8ac" stroke-width="1"/><path d="M1374 282.6 V304" stroke="#a7a8ac" stroke-width="1"/><path d="M1416.7 240.6 V304" stroke="#a7a8ac" stroke-width="1"/><path d="M1446.5 218.5 V304" stroke="#a7a8ac" stroke-width="1"/><path d="M1452 198 V304" stroke="#a7a8ac" stroke-width="1"/><path d="M1472.7 240.6 V304" stroke="#a7a8ac" stroke-width="1"/><path d="M1555.4 282.6 V304" stroke="#a7a8ac" stroke-width="1"/><path d="M1581 261 V304" stroke="#a7a8ac" stroke-width="1"/><path d="M1590.3 240.6 V304" stroke="#a7a8ac" stroke-width="1"/><path d="M1601.4 218.5 V304" stroke="#a7a8ac" stroke-width="1"/><path d="M1641.2 240.6 V304" stroke="#a7a8ac" stroke-width="1"/><path d="M1657.7 218.5 V304" stroke="#a7a8ac" stroke-width="1"/><path d="M1661.5 198 V304" stroke="#a7a8ac" stroke-width="1"/><path d="M1677.6 282.6 V304" stroke="#a7a8ac" stroke-width="1"/><path d="M1680.5 154 V304" stroke="#a7a8ac" stroke-width="1"/><path d="M1705.7 261 V304" stroke="#a7a8ac" stroke-width="1"/><path d="M1727.4 240.6 V304" stroke="#a7a8ac" stroke-width="1"/><path d="M1793.7 282.6 V304" stroke="#a7a8ac" stroke-width="1"/></svg>
<div class="a" style="left:12.50px;top:118.32px;font:14.583px/17px 'Liberation Mono', monospace;color:#6a6b6e;white-space:pre">PciI</div>
<div class="a" style="left:89.20px;top:118.32px;font:14.583px/17px 'Liberation Mono', monospace;color:#6a6b6e;white-space:pre">AscI</div>
<div class="a" style="left:219.60px;top:118.32px;font:14.583px/17px 'Liberation Mono', monospace;color:#6a6b6e;white-space:pre">PmeI</div>
<div class="a" style="left:300.90px;top:118.32px;font:14.583px/17px 'Liberation Mono', monospace;color:#6a6b6e;white-space:pre">PflFI</div>
<div class="a" style="left:401.60px;top:118.32px;font:14.583px/17px 'Liberation Mono', monospace;color:#6a6b6e;white-space:pre">PasI</div>
<div class="a" style="left:447.40px;top:118.32px;font:14.583px/17px 'Liberation Mono', monospace;color:#6a6b6e;white-space:pre">Acc65I</div>
<div class="a" style="left:523.20px;top:118.32px;font:14.583px/17px 'Liberation Mono', monospace;color:#6a6b6e;white-space:pre">EagI</div>
<div class="a" style="left:573.40px;top:118.32px;font:14.583px/17px 'Liberation Mono', monospace;color:#6a6b6e;white-space:pre">FspAI</div>
<div class="a" style="left:640.00px;top:118.32px;font:14.583px/17px 'Liberation Mono', monospace;color:#6a6b6e;white-space:pre">A</div>
<div class="a" style="left:262.20px;top:96.92px;font:14.583px/17px 'Liberation Mono', monospace;color:#6a6b6e;white-space:pre">PspOMI</div>
<div class="a" style="left:427.00px;top:96.92px;font:14.583px/17px 'Liberation Mono', monospace;color:#6a6b6e;white-space:pre">PmeI</div>
<div class="a" style="left:487.40px;top:96.92px;font:14.583px/17px 'Liberation Mono', monospace;color:#6a6b6e;white-space:pre">Acc65I</div>
<div class="a" style="left:551.50px;top:96.92px;font:14.583px/17px 'Liberation Mono', monospace;color:#6a6b6e;white-space:pre">AfeI</div>
<div class="a" style="left:640.00px;top:96.92px;font:14.583px/17px 'Liberation Mono', monospace;color:#6a6b6e;white-space:pre">A</div>
<div class="a" style="left:262.90px;top:75.62px;font:14.583px/17px 'Liberation Mono', monospace;color:#6a6b6e;white-space:pre">ApaI</div>
<div class="a" style="left:318.60px;top:75.62px;font:14.583px/17px 'Liberation Mono', monospace;color:#6a6b6e;white-space:pre">SnaBI</div>
<div class="a" style="left:437.00px;top:75.62px;font:14.583px/17px 'Liberation Mono', monospace;color:#6a6b6e;white-space:pre">AscI</div>
<div class="a" style="left:486.70px;top:75.62px;font:14.583px/17px 'Liberation Mono', monospace;color:#6a6b6e;white-space:pre">KpnI</div>
<div class="a" style="left:573.60px;top:75.62px;font:14.583px/17px 'Liberation Mono', monospace;color:#6a6b6e;white-space:pre">FspAI</div>
<div class="a" style="left:301.60px;top:54.22px;font:14.583px/17px 'Liberation Mono', monospace;color:#6a6b6e;white-space:pre">Tth111I</div>
<div class="a" style="left:447.40px;top:54.22px;font:14.583px/17px 'Liberation Mono', monospace;color:#6a6b6e;white-space:pre">KpnI</div>
<div class="a" style="left:503.70px;top:54.22px;font:14.583px/17px 'Liberation Mono', monospace;color:#6a6b6e;white-space:pre">PasI</div>
<div class="a" style="left:297.60px;top:32.82px;font:14.583px/17px 'Liberation Mono', monospace;color:#6a6b6e;white-space:pre">BsaI</div>
<div class="a" style="left:507.30px;top:32.82px;font:14.583px/17px 'Liberation Mono', monospace;color:#6a6b6e;white-space:pre">BsiWI</div>
<div class="a" style="left:526.00px;top:11.42px;font:14.583px/17px 'Liberation Mono', monospace;color:#6a6b6e;white-space:pre">NgoMIV</div>
<div class="a" style="left:526.00px;top:-9.98px;font:14.583px/17px 'Liberation Mono', monospace;color:#6a6b6e;white-space:pre">NaeI</div>
<div class="a" style="left:34.45px;top:169.75px;font:12.2px/14px 'Liberation Mono', monospace;color:#222;white-space:pre">2,000</div>
<div class="a" style="left:87.50px;top:169.75px;font:12.2px/14px 'Liberation Mono', monospace;color:#222;white-space:pre">4,000</div>
<div class="a" style="left:140.55px;top:169.75px;font:12.2px/14px 'Liberation Mono', monospace;color:#222;white-space:pre">6,000</div>
<div class="a" style="left:193.60px;top:169.75px;font:12.2px/14px 'Liberation Mono', monospace;color:#222;white-space:pre">8,000</div>
<div class="a" style="left:242.99px;top:169.75px;font:12.2px/14px 'Liberation Mono', monospace;color:#222;white-space:pre">10,000</div>
<div class="a" style="left:296.04px;top:169.75px;font:12.2px/14px 'Liberation Mono', monospace;color:#222;white-space:pre">12,000</div>
<div class="a" style="left:349.09px;top:169.75px;font:12.2px/14px 'Liberation Mono', monospace;color:#222;white-space:pre">14,000</div>
<div class="a" style="left:402.14px;top:169.75px;font:12.2px/14px 'Liberation Mono', monospace;color:#222;white-space:pre">16,000</div>
<div class="a" style="left:455.19px;top:169.75px;font:12.2px/14px 'Liberation Mono', monospace;color:#222;white-space:pre">18,000</div>
<div class="a" style="left:508.24px;top:169.75px;font:12.2px/14px 'Liberation Mono', monospace;color:#222;white-space:pre">20,000</div>
<div class="a" style="left:561.29px;top:169.75px;font:12.2px/14px 'Liberation Mono', monospace;color:#222;white-space:pre">22,000</div>
<div class="a" style="left:614.34px;top:169.75px;font:12.2px/14px 'Liberation Mono', monospace;color:#222;white-space:pre">24,000</div>
<svg class="a" style="left:0;top:0" width="644" height="708" viewBox="1150 149 644 708"><path d="M1698.85 586.25 Q1698.85 584.75 1697.35 584.75 L1692.2 584.75 L1683.2 592 L1692.2 599.25 L1697.35 599.25 Q1698.85 599.25 1698.85 597.75 Z" fill="#d1c0e4" stroke="#9a86b6" stroke-width="1.5" stroke-linejoin="round"/><path d="M1731.75 586.25 Q1731.75 584.75 1733.25 584.75 L1738.0 584.75 L1747.0 592 L1738.0 599.25 L1733.25 599.25 Q1731.75 599.25 1731.75 597.75 Z" fill="#f2d8b9" stroke="#cdae86" stroke-width="1.5" stroke-linejoin="round"/><path d="M1699.25 606.25 Q1699.25 604.75 1697.75 604.75 L1692.5 604.75 L1683.5 612 L1692.5 619.25 L1697.75 619.25 Q1699.25 619.25 1699.25 617.75 Z" fill="#9dbfe0" stroke="#5d86b2" stroke-width="1.5" stroke-linejoin="round"/><path d="M1731.75 606.25 Q1731.75 604.75 1733.25 604.75 L1738.0 604.75 L1747.0 612 L1738.0 619.25 L1733.25 619.25 Q1731.75 619.25 1731.75 617.75 Z" fill="#d9ada2" stroke="#a9776b" stroke-width="1.5" stroke-linejoin="round"/><path d="M1662.75 626.25 Q1662.75 624.75 1664.25 624.75 L1756.8 624.75 L1765.8 632 L1756.8 639.25 L1664.25 639.25 Q1662.75 639.25 1662.75 637.75 Z" fill="#f6afd5" stroke="#c86ea2" stroke-width="1.5" stroke-linejoin="round"/><path d="M1829.25 646.25 Q1829.25 644.75 1827.75 644.75 L1653.1 644.75 L1644.1 652 L1653.1 659.25 L1827.75 659.25 Q1829.25 659.25 1829.25 657.75 Z" fill="#c0f08c" stroke="#7fc15a" stroke-width="1.5" stroke-linejoin="round"/><path d="M1829.25 666.25 Q1829.25 664.75 1827.75 664.75 L1653.1 664.75 L1644.1 672 L1653.1 679.25 L1827.75 679.25 Q1829.25 679.25 1829.25 677.75 Z" fill="#f6afd5" stroke="#c86ea2" stroke-width="1.5" stroke-linejoin="round"/><path d="M1829.25 686.25 Q1829.25 684.75 1827.75 684.75 L1652.1 684.75 L1643.1 692 L1652.1 699.25 L1827.75 699.25 Q1829.25 699.25 1829.25 697.75 Z" fill="#c0f08c" stroke="#7fc15a" stroke-width="1.5" stroke-linejoin="round"/><path d="M1829.25 706.25 Q1829.25 704.75 1827.75 704.75 L1652.1 704.75 L1643.1 712 L1652.1 719.25 L1827.75 719.25 Q1829.25 719.25 1829.25 717.75 Z" fill="#ddc4aa" stroke="#aa8c6e" stroke-width="1.5" stroke-linejoin="round"/><path d="M1829.25 726.25 Q1829.25 724.75 1827.75 724.75 L1651.1 724.75 L1642.1 732 L1651.1 739.25 L1827.75 739.25 Q1829.25 739.25 1829.25 737.75 Z" fill="#f1a386" stroke="#c86c4e" stroke-width="1.5" stroke-linejoin="round"/><path d="M1225.05 746.25 Q1225.05 744.75 1226.55 744.75 L1258.2 744.75 L1267.2 752 L1258.2 759.25 L1226.55 759.25 Q1225.05 759.25 1225.05 757.75 Z" fill="#d1c0e4" stroke="#9a86b6" stroke-width="1.5" stroke-linejoin="round"/><path d="M1829.25 746.25 Q1829.25 744.75 1827.75 744.75 L1651.1 744.75 L1642.1 752 L1651.1 759.25 L1827.75 759.25 Q1829.25 759.25 1829.25 757.75 Z" fill="#f4b985" stroke="#c98646" stroke-width="1.5" stroke-linejoin="round"/><path d="M1168.75 766.25 Q1168.75 764.75 1170.25 764.75 L1210.5 764.75 L1219.5 772 L1210.5 779.25 L1170.25 779.25 Q1168.75 779.25 1168.75 777.75 Z" fill="#cfd1d6" stroke="#96989c" stroke-width="1.5" stroke-linejoin="round"/><path d="M1225.05 766.25 Q1225.05 764.75 1226.55 764.75 L1258.2 764.75 L1267.2 772 L1258.2 779.25 L1226.55 779.25 Q1225.05 779.25 1225.05 777.75 Z" fill="#cfd1d6" stroke="#96989c" stroke-width="1.5" stroke-linejoin="round"/><path d="M1285.75 766.25 Q1285.75 764.75 1287.25 764.75 L1292.5 764.75 L1301.5 772 L1292.5 779.25 L1287.25 779.25 Q1285.75 779.25 1285.75 777.75 Z" fill="#ddc4aa" stroke="#aa8c6e" stroke-width="1.5" stroke-linejoin="round"/><path d="M1540.75 766.25 Q1540.75 764.75 1542.25 764.75 L1549.5 764.75 L1558.5 772 L1549.5 779.25 L1542.25 779.25 Q1540.75 779.25 1540.75 777.75 Z" fill="#f5e99b" stroke="#cdbd63" stroke-width="1.5" stroke-linejoin="round"/><path d="M1829.25 766.25 Q1829.25 764.75 1827.75 764.75 L1648.0 764.75 L1639.0 772 L1648.0 779.25 L1827.75 779.25 Q1829.25 779.25 1829.25 777.75 Z" fill="#93cfb7" stroke="#4f9a7e" stroke-width="1.5" stroke-linejoin="round"/><path d="M1168.75 786.25 Q1168.75 784.75 1170.25 784.75 L1210.5 784.75 L1219.5 792 L1210.5 799.25 L1170.25 799.25 Q1168.75 799.25 1168.75 797.75 Z" fill="#f1a386" stroke="#c86c4e" stroke-width="1.5" stroke-linejoin="round"/><path d="M1266.75 786.25 Q1266.75 784.75 1268.25 784.75 L1292.5 784.75 L1301.5 792 L1292.5 799.25 L1268.25 799.25 Q1266.75 799.25 1266.75 797.75 Z" fill="#b2bed9" stroke="#6e7ea6" stroke-width="1.5" stroke-linejoin="round"/><path d="M1540.75 786.25 Q1540.75 784.75 1542.25 784.75 L1549.5 784.75 L1558.5 792 L1549.5 799.25 L1542.25 799.25 Q1540.75 799.25 1540.75 797.75 Z" fill="#f4b985" stroke="#c98646" stroke-width="1.5" stroke-linejoin="round"/><path d="M1829.25 786.25 Q1829.25 784.75 1827.75 784.75 L1648.0 784.75 L1639.0 792 L1648.0 799.25 L1827.75 799.25 Q1829.25 799.25 1829.25 797.75 Z" fill="#f2d8b9" stroke="#cdae86" stroke-width="1.5" stroke-linejoin="round"/><path d="M1266.75 806.25 Q1266.75 804.75 1268.25 804.75 L1292.5 804.75 L1301.5 812 L1292.5 819.25 L1268.25 819.25 Q1266.75 819.25 1266.75 817.75 Z" fill="#beb8b6" stroke="#7a7472" stroke-width="1.5" stroke-linejoin="round"/><path d="M1312.75 806.25 Q1312.75 804.75 1314.25 804.75 L1330.1 804.75 L1339.1 812 L1330.1 819.25 L1314.25 819.25 Q1312.75 819.25 1312.75 817.75 Z" fill="#cfd1d6" stroke="#96989c" stroke-width="1.5" stroke-linejoin="round"/><path d="M1360.95 806.25 Q1360.95 804.75 1362.45 804.75 L1367.5 804.75 L1376.5 812 L1367.5 819.25 L1362.45 819.25 Q1360.95 819.25 1360.95 817.75 Z" fill="#f1a386" stroke="#c86c4e" stroke-width="1.5" stroke-linejoin="round"/><path d="M1387.15 806.25 Q1387.15 804.75 1388.65 804.75 L1397.5 804.75 L1406.5 812 L1397.5 819.25 L1388.65 819.25 Q1387.15 819.25 1387.15 817.75 Z" fill="#c4e6dc" stroke="#8cbeae" stroke-width="1.5" stroke-linejoin="round"/><path d="M1429.15 806.25 Q1429.15 804.75 1430.65 804.75 L1487.5 804.75 L1496.5 812 L1487.5 819.25 L1430.65 819.25 Q1429.15 819.25 1429.15 817.75 Z" fill="#cfd1d6" stroke="#96989c" stroke-width="1.5" stroke-linejoin="round"/><path d="M1505.75 806.25 Q1505.75 804.75 1507.25 804.75 L1514.3 804.75 L1523.3 812 L1514.3 819.25 L1507.25 819.25 Q1505.75 819.25 1505.75 817.75 Z" fill="#f6afd5" stroke="#c86ea2" stroke-width="1.5" stroke-linejoin="round"/><path d="M1527.75 806.25 Q1527.75 804.75 1529.25 804.75 L1534.2 804.75 L1543.2 812 L1534.2 819.25 L1529.25 819.25 Q1527.75 819.25 1527.75 817.75 Z" fill="#b2bed9" stroke="#6e7ea6" stroke-width="1.5" stroke-linejoin="round"/><path d="M1560.75 806.25 Q1560.75 804.75 1562.25 804.75 L1640.5 804.75 L1649.5 812 L1640.5 819.25 L1562.25 819.25 Q1560.75 819.25 1560.75 817.75 Z" fill="#f1a386" stroke="#c86c4e" stroke-width="1.5" stroke-linejoin="round"/><path d="M1651.75 806.25 Q1651.75 804.75 1653.25 804.75 L1659.0 804.75 L1668.0 812 L1659.0 819.25 L1653.25 819.25 Q1651.75 819.25 1651.75 817.75 Z" fill="#93cfb7" stroke="#4f9a7e" stroke-width="1.5" stroke-linejoin="round"/><path d="M1669.75 806.25 Q1669.75 804.75 1671.25 804.75 L1692.5 804.75 L1701.5 812 L1692.5 819.25 L1671.25 819.25 Q1669.75 819.25 1669.75 817.75 Z" fill="#cfd1d6" stroke="#96989c" stroke-width="1.5" stroke-linejoin="round"/><path d="M1706.55 806.25 Q1706.55 804.75 1708.05 804.75 L1722.3 804.75 L1731.3 812 L1722.3 819.25 L1708.05 819.25 Q1706.55 819.25 1706.55 817.75 Z" fill="#93cfb7" stroke="#4f9a7e" stroke-width="1.5" stroke-linejoin="round"/><path d="M1783.05 806.25 Q1783.05 804.75 1781.55 804.75 L1759.3 804.75 L1750.3 812 L1759.3 819.25 L1781.55 819.25 Q1783.05 819.25 1783.05 817.75 Z" fill="#93cfb7" stroke="#4f9a7e" stroke-width="1.5" stroke-linejoin="round"/><path d="M1226.75 826.25 Q1226.75 824.75 1228.25 824.75 L1258.2 824.75 L1267.2 832 L1258.2 839.25 L1228.25 839.25 Q1226.75 839.25 1226.75 837.75 Z" fill="#9dbfe0" stroke="#5d86b2" stroke-width="1.5" stroke-linejoin="round"/><path d="M1285.75 826.25 Q1285.75 824.75 1287.25 824.75 L1292.5 824.75 L1301.5 832 L1292.5 839.25 L1287.25 839.25 Q1285.75 839.25 1285.75 837.75 Z" fill="#f2d8b9" stroke="#cdae86" stroke-width="1.5" stroke-linejoin="round"/><path d="M1312.75 826.25 Q1312.75 824.75 1314.25 824.75 L1330.1 824.75 L1339.1 832 L1330.1 839.25 L1314.25 839.25 Q1312.75 839.25 1312.75 837.75 Z" fill="#f1a386" stroke="#c86c4e" stroke-width="1.5" stroke-linejoin="round"/><path d="M1360.75 826.25 Q1360.75 824.75 1362.25 824.75 L1367.5 824.75 L1376.5 832 L1367.5 839.25 L1362.25 839.25 Q1360.75 839.25 1360.75 837.75 Z" fill="#9dbfe0" stroke="#5d86b2" stroke-width="1.5" stroke-linejoin="round"/><path d="M1386.75 826.25 Q1386.75 824.75 1388.25 824.75 L1397.5 824.75 L1406.5 832 L1397.5 839.25 L1388.25 839.25 Q1386.75 839.25 1386.75 837.75 Z" fill="#93cfb7" stroke="#4f9a7e" stroke-width="1.5" stroke-linejoin="round"/><path d="M1428.75 826.25 Q1428.75 824.75 1430.25 824.75 L1487.5 824.75 L1496.5 832 L1487.5 839.25 L1430.25 839.25 Q1428.75 839.25 1428.75 837.75 Z" fill="#d1c0e4" stroke="#9a86b6" stroke-width="1.5" stroke-linejoin="round"/><path d="M1505.75 826.25 Q1505.75 824.75 1507.25 824.75 L1514.5 824.75 L1523.5 832 L1514.5 839.25 L1507.25 839.25 Q1505.75 839.25 1505.75 837.75 Z" fill="#f5e99b" stroke="#cdbd63" stroke-width="1.5" stroke-linejoin="round"/><path d="M1527.75 826.25 Q1527.75 824.75 1529.25 824.75 L1534.5 824.75 L1543.5 832 L1534.5 839.25 L1529.25 839.25 Q1527.75 839.25 1527.75 837.75 Z" fill="#f5e99b" stroke="#cdbd63" stroke-width="1.5" stroke-linejoin="round"/><path d="M1560.75 826.25 Q1560.75 824.75 1562.25 824.75 L1640.5 824.75 L1649.5 832 L1640.5 839.25 L1562.25 839.25 Q1560.75 839.25 1560.75 837.75 Z" fill="#b2bed9" stroke="#6e7ea6" stroke-width="1.5" stroke-linejoin="round"/><path d="M1651.75 826.25 Q1651.75 824.75 1653.25 824.75 L1659.0 824.75 L1668.0 832 L1659.0 839.25 L1653.25 839.25 Q1651.75 839.25 1651.75 837.75 Z" fill="#d1c0e4" stroke="#9a86b6" stroke-width="1.5" stroke-linejoin="round"/><path d="M1669.75 826.25 Q1669.75 824.75 1671.25 824.75 L1692.5 824.75 L1701.5 832 L1692.5 839.25 L1671.25 839.25 Q1669.75 839.25 1669.75 837.75 Z" fill="#f6afd5" stroke="#c86ea2" stroke-width="1.5" stroke-linejoin="round"/><path d="M1706.75 826.25 Q1706.75 824.75 1708.25 824.75 L1722.5 824.75 L1731.5 832 L1722.5 839.25 L1708.25 839.25 Q1706.75 839.25 1706.75 837.75 Z" fill="#b2bed9" stroke="#6e7ea6" stroke-width="1.5" stroke-linejoin="round"/><path d="M1783.25 826.25 Q1783.25 824.75 1781.75 824.75 L1759.5 824.75 L1750.5 832 L1759.5 839.25 L1781.75 839.25 Q1783.25 839.25 1783.25 837.75 Z" fill="#f4b985" stroke="#c98646" stroke-width="1.5" stroke-linejoin="round"/></svg>
<div class="a" style="left:527.00px;top:477.46px;font:13.3px/16px 'Liberation Mono', monospace;color:#111;white-space:pre">lam...on</div><div class="a" style="left:519.10px;top:497.46px;font:13.3px/16px 'Liberation Mono', monospace;color:#111;white-space:pre">lambdap25 mRNA (note</div><div class="a" style="left:518.10px;top:537.46px;font:13.3px/16px 'Liberation Mono', monospace;color:#111;white-space:pre">lambdap24 mRNA (note</div><div class="a" style="left:517.10px;top:577.46px;font:13.3px/16px 'Liberation Mono', monospace;color:#111;white-space:pre">lambdap23 mRNA (note</div><div class="a" style="left:514.00px;top:617.46px;font:13.3px/16px 'Liberation Mono', monospace;color:#111;white-space:pre">lambdap22 mRNA (note</div><div class="a" style="left:426.20px;top:657.46px;font:13.3px/16px 'Liberation Mono', monospace;color:#111;white-space:pre">J ...e</div><div class="a" style="left:426.20px;top:677.46px;font:13.3px/16px 'Liberation Mono', monospace;color:#111;white-space:pre">J ...)</div>
<div class="a" style="left:0px;top:695px;width:644px;height:2px;background:#2e2e30"></div>
<div class="a" style="left:0px;top:697px;width:644px;height:14px;background:#c6afe3"></div>
<div class="a" style="left:284.70000000000005px;top:697.9px;font:bold 13.2px/15px 'Liberation Mono', monospace;color:#111;white-space:pre">source</div>
</div>
<div class="a" style="left:12.599999999999909px;top:5px;width:1.4px;height:708px;background:#111"></div>
</div>
<div style="position:absolute;left:469px;top:867px;width:1391px;height:30px;background:linear-gradient(#e6e7e9,#dcdde0);border-top:1px solid #c9ccd0;box-sizing:border-box"></div>
<div style="position:absolute;left:587px;top:868px;width:1px;height:29px;background:#c4c7cc"></div>
<div style="position:absolute;left:960px;top:868px;width:1px;height:29px;background:#c4c7cc"></div>
<div style="position:absolute;left:1142px;top:868px;width:1px;height:29px;background:#c4c7cc"></div>
<div style="position:absolute;left:1156px;top:868px;width:1px;height:29px;background:#c4c7cc"></div>
<div style="position:absolute;left:1581px;top:868px;width:117px;height:29px;background:#e7e8ea;border-left:1px solid #cfd2d6;box-sizing:border-box"></div>
<div style="position:absolute;left:1698px;top:868px;width:156px;height:29px;background:#d8d9dc;box-shadow:inset 0 2px 4px rgba(0,0,0,0.12)"></div>
<div style="position:absolute;left:1853px;top:868px;width:1px;height:29px;background:#c4c7cc"></div>
<div style="position:absolute;left:481.3px;top:876px;white-space:pre;font-size:13.5px;line-height:16px;font-weight:bold;color:#1c1c1f">BASES</div>
<div style="position:absolute;left:531px;top:876px;white-space:pre;font-size:13.5px;line-height:16px;color:#1c1c1f;letter-spacing:1.0px">48502</div>
<div style="position:absolute;left:601px;top:876px;white-space:pre;font-size:13.5px;line-height:16px;font-weight:bold;color:#1c1c1f">START</div>
<div style="position:absolute;left:648.7px;top:876px;white-space:pre;font-size:13.5px;line-height:16px;color:#1c1c1f;letter-spacing:0px">1</div>
<div style="position:absolute;left:667.2px;top:876px;white-space:pre;font-size:13.5px;line-height:16px;font-weight:bold;color:#1c1c1f">END</div>
<div style="position:absolute;left:701px;top:876px;white-space:pre;font-size:13.5px;line-height:16px;color:#1c1c1f;letter-spacing:1.0px">48502</div>
<div style="position:absolute;left:757.5px;top:876px;white-space:pre;font-size:13.5px;line-height:16px;font-weight:bold;color:#1c1c1f">LENGTH</div>
<div style="position:absolute;left:818.4px;top:876px;white-space:pre;font-size:13.5px;line-height:16px;color:#1c1c1f;letter-spacing:1.0px">48502</div>
<div style="position:absolute;left:874.9px;top:876px;white-space:pre;font-size:13.5px;line-height:16px;font-weight:bold;color:#1c1c1f">GC</div>
<div style="position:absolute;left:899.3px;top:876px;white-space:pre;font-size:13.5px;line-height:16px;color:#1c1c1f;letter-spacing:0.5px">49.86%</div>
<div style="position:absolute;left:974.5px;top:876px;white-space:pre;font-size:13.5px;line-height:16px;font-weight:bold;color:#1c1c1f">MELTING TEMP</div>
<div style="position:absolute;left:1082.6px;top:876px;white-space:pre;font-size:13.5px;line-height:16px;color:#1c1c1f;letter-spacing:0.25px">80.3 °C</div>
<div style="position:absolute;left:1594.4px;top:876px;white-space:pre;font-size:13px;line-height:16px;font-weight:bold;color:#1c1c1f;letter-spacing:0.15px">ASSEMBLY</div>
<svg class="a" style="left:1673px;top:880px" width="12" height="8"><path d="M0.5 7 L5.5 1.5 L10.5 7Z" fill="#1c1c1f"/></svg>
<div style="position:absolute;left:1710.3px;top:876px;white-space:pre;font-size:13px;line-height:16px;font-weight:bold;color:#1c1c1f;letter-spacing:0.33px">SPLIT WORKSPACE</div>
<svg class="a" style="left:1829px;top:123px" width="13" height="16" viewBox="0 0 13 16"><path d="M0.3 0 H12.7 V15.8 L6.5 10.8 L0.3 15.8Z" fill="#3d3d42"/></svg>
<svg class="a" style="left:1826px;top:186px" width="18" height="15" viewBox="0 0 18 15" fill="none" stroke="#3d3d42" stroke-width="1.3">
<circle cx="3.6" cy="3.5" r="2.6"/><circle cx="3.6" cy="11.5" r="2.6"/><path d="M5.8 4.8 L17 12.5 M5.8 10.2 L17 2.5"/></svg>
<svg class="a" style="left:1826px;top:249px" width="18" height="15" viewBox="0 0 18 15" fill="none" stroke="#3d3d42" stroke-width="2">
<path d="M1 3.8 H16 M13.5 1 L16.3 3.8 L13.5 6.8 M1.5 9.9 H16.5 M4 7 L1.2 9.9 L4 12.8"/></svg>
<svg class="a" style="left:1826px;top:311px" width="17" height="17" viewBox="0 0 17 17" fill="none" stroke="#3d3d42" stroke-width="1.9">
<circle cx="8.5" cy="8.5" r="6.6"/><path d="M8.3 4.6 V9.2 H11.3" stroke-width="1.5"/></svg>
<svg class="a" style="left:1826px;top:373px" width="18" height="17" viewBox="0 0 18 17" fill="#3d3d42">
<rect x="1" y="1.1" width="9" height="2.5"/><rect x="1" y="5.3" width="14.2" height="2.5"/><rect x="1" y="9.2" width="11.6" height="2.5"/><rect x="1" y="13.2" width="15.6" height="2.5"/></svg>
<svg class="a" style="left:1825px;top:435px" width="19" height="19" viewBox="0 0 19 19" fill="none" stroke="#3d3d42">
<circle cx="9.5" cy="9.5" r="5" stroke-width="1.8"/><path d="M9.5 1 V18 M1 9.5 H18" stroke-width="1.6"/><circle cx="9.5" cy="9.5" r="1.6" fill="#3d3d42" stroke="none"/></svg>
<svg class="a" style="left:1826px;top:498px" width="17" height="17" viewBox="0 0 17 17">
<circle cx="8.5" cy="8.5" r="8" fill="#3d3d42"/><circle cx="8.5" cy="4.7" r="1.4" fill="#fff"/><path d="M6.6 7.2 H9.6 V12.2 H10.8 V13.6 H6.4 V12.2 H7.6 V8.6 H6.6Z" fill="#fff"/></svg>
<div style="position:absolute;left:1820px;top:566px;width:60px;height:46px;background:#fff;border-radius:23px;box-shadow:0 0 0 0.6px rgba(0,0,0,0.12),0 3px 8px rgba(0,0,0,0.2)"></div>
<svg class="a" style="left:1828px;top:574px" width="30" height="30" viewBox="0 0 30 30"><defs><linearGradient id="pg" x1="0" y1="0" x2="0" y2="1"><stop offset="0" stop-color="#0079b8"/><stop offset="1" stop-color="#023866"/></linearGradient><clipPath id="pc"><circle cx="15" cy="15" r="15"/></clipPath></defs>
<circle cx="15" cy="15" r="15" fill="url(#pg)"/><g clip-path="url(#pc)"><circle cx="15" cy="10.5" r="4" fill="#ff7300"/><path d="M10.5 31 L11.8 19.5 Q12.3 16.5 15 16.5 Q17.7 16.5 18.2 19.5 L19.5 31Z" fill="#ff7300"/></g></svg>
<div style="position:absolute;left:1808px;top:809px;width:53px;height:53px;background:#3d63f2;border-radius:50%;box-shadow:0 2px 6px rgba(0,0,0,0.25)"></div>
<div style="position:absolute;left:1828px;top:822px;white-space:pre;font-size:23px;line-height:26px;color:#fff">?</div>
</body></html>
